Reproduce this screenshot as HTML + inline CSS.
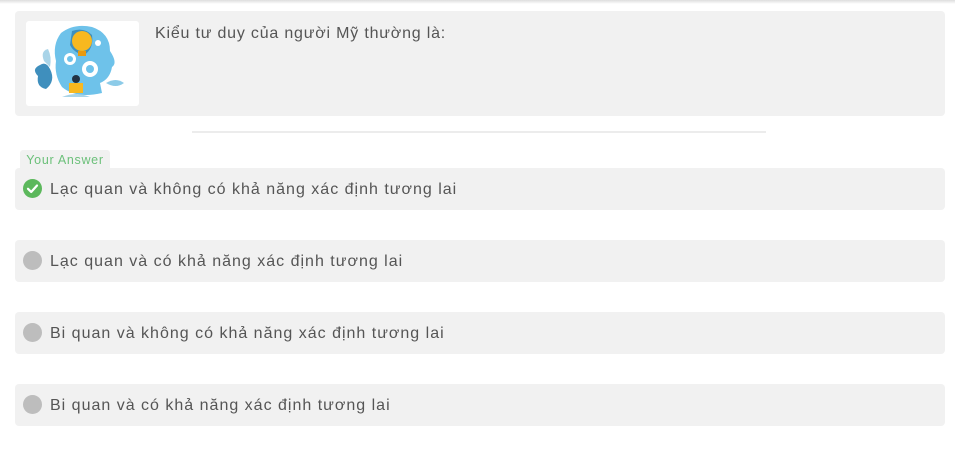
<!DOCTYPE html>
<html><head><meta charset="utf-8"><style>
body{margin:0;width:955px;height:472px;background:#fff;font-family:"Liberation Sans",sans-serif;position:relative;overflow:hidden}
.top{position:absolute;left:0;top:0;width:955px;height:4px;background:linear-gradient(#ddd,#fff)}
.q{position:absolute;left:15px;top:11px;width:930px;height:105px;background:#f1f1f1;border-radius:4px}
.img{position:absolute;left:11px;top:10px;width:113px;height:85px;background:#fff;border-radius:3px;overflow:hidden}
.qt{position:absolute;left:140px;top:14px;font-size:16px;color:#555;letter-spacing:0.8px}
.div{position:absolute;left:192px;top:131px;width:574px;height:2px;background:#ececec}
.tag{position:absolute;left:20px;top:150px;width:90px;height:18px;background:#f1f1f1;border-radius:3px 3px 0 0;color:#6cc07a;font-size:12.5px;text-align:center;line-height:20px;letter-spacing:0.7px}
.opt{position:absolute;left:15px;width:930px;height:42px;background:#f1f1f1;border-radius:4px}
.opt .c{position:absolute;left:8px;top:11px;width:19px;height:19px;border-radius:50%;background:#bdbdbd}
.opt .t{position:absolute;left:35px;top:13px;font-size:16px;color:#555;letter-spacing:1px}
</style></head><body>
<div class="top"></div>
<div class="q"><div class="img"><svg width="113" height="85" viewBox="0 0 113 85">
<path d="M12 55 Q5 48 14 44 Q20 40 24 48 Q30 60 20 68 Q10 66 12 55Z" fill="#3f8fbd"/>
<path d="M18 40 Q14 30 22 28 Q26 36 24 46Z" fill="#a9d4e8"/>
<path d="M35 12 Q48 2 66 6 Q84 12 84 30 Q92 42 86 46 Q84 58 74 62 L76 72 Q50 78 36 66 Q28 54 30 40 Q26 24 35 12Z" fill="#6ec2ea"/>
<path d="M46 10 Q58 6 66 14 Q68 28 58 34 Q48 32 44 24Z" fill="#3f8fbd"/>
<circle cx="56" cy="20" r="10" fill="#f8b81f"/>
<rect x="52" y="30" width="8" height="5" fill="#e89a10"/>
<circle cx="44" cy="38" r="6" fill="#fff"/><circle cx="44" cy="38" r="3" fill="#6ec2ea"/>
<circle cx="64" cy="48" r="8" fill="#fff"/><circle cx="64" cy="48" r="4" fill="#6ec2ea"/>
<circle cx="72" cy="22" r="3" fill="#fff"/>
<rect x="43" y="62" width="14" height="10" fill="#f8b81f"/>
<circle cx="50" cy="58" r="4" fill="#234"/>
<path d="M36 76 Q50 70 64 76Z" fill="#a9d4e8"/>
<path d="M80 62 Q90 56 98 62 Q90 68 80 62Z" fill="#8ccbe8"/>
</svg></div><div class="qt">Kiểu tư duy của người Mỹ thường là:</div></div>
<div class="div"></div>
<div class="tag">Your Answer</div>
<div class="opt" style="top:168px"><div class="c" style="background:#5cb85c"><svg width="19" height="19"><path d="M5 9.8 L8.2 13 L14 6.5" stroke="#fff" stroke-width="2.2" fill="none" stroke-linecap="round" stroke-linejoin="round"/></svg></div><div class="t">Lạc quan và không có khả năng xác định tương lai</div></div>
<div class="opt" style="top:240px"><div class="c"></div><div class="t">Lạc quan và có khả năng xác định tương lai</div></div>
<div class="opt" style="top:312px"><div class="c"></div><div class="t">Bi quan và không có khả năng xác định tương lai</div></div>
<div class="opt" style="top:384px"><div class="c"></div><div class="t">Bi quan và có khả năng xác định tương lai</div></div>
</body></html>
